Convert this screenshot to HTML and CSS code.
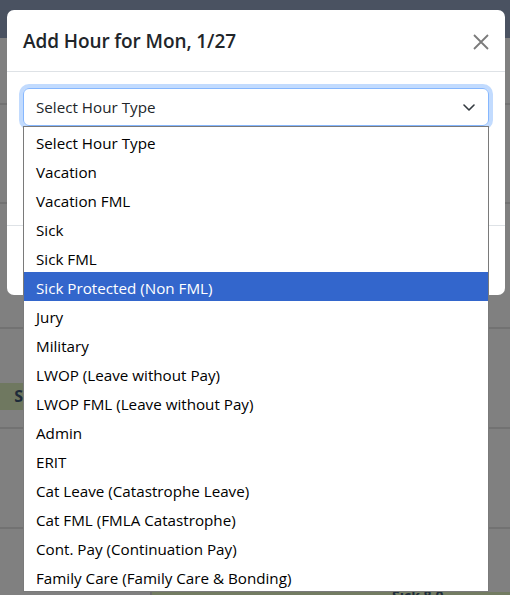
FILE: index.html
```html
<!DOCTYPE html>
<html lang="en">
<head>
<meta charset="utf-8">
<title>Add Hour</title>
<link rel="stylesheet" href="styles.css">
</head>
<body>
<div class="page">
  <div class="topbar"></div>
  <div class="band band-a"></div>
  <div class="band band-b"></div>
  <div class="band band-c"></div>
  <div class="band band-d"></div>
  <div class="band band-e"><span class="tag">S</span></div>
  <div class="band band-f"></div>
  <div class="band band-g"></div>
  <div class="band band-h"><span class="gap"></span><span class="sum">Sick 8.0</span></div>
</div>

<div class="modal">
  <div class="modal-header">
    <h5 class="modal-title">Add Hour for Mon, 1/27</h5>
    <button class="btn-close" aria-label="Close">
      <svg viewBox="0 0 16 16" width="16" height="16"><path d="M1 1L15 15M15 1L1 15" stroke="#7b7b7b" stroke-width="1.8" fill="none"/></svg>
    </button>
  </div>
  <div class="modal-body">
    <div class="select-wrap">
      <div class="form-select">
        <span>Select Hour Type</span>
        <svg class="chev" viewBox="0 0 12 7" width="12" height="7"><path d="M1 1l5 5 5-5" stroke="#343a40" stroke-width="1.6" fill="none" stroke-linecap="round" stroke-linejoin="round"/></svg>
      </div>
      <ul class="listbox">
        <li>Select Hour Type</li>
        <li>Vacation</li>
        <li>Vacation FML</li>
        <li>Sick</li>
        <li>Sick FML</li>
        <li class="active">Sick Protected (Non FML)</li>
        <li>Jury</li>
        <li>Military</li>
        <li>LWOP (Leave without Pay)</li>
        <li>LWOP FML (Leave without Pay)</li>
        <li>Admin</li>
        <li>ERIT</li>
        <li>Cat Leave (Catastrophe Leave)</li>
        <li>Cat FML (FMLA Catastrophe)</li>
        <li>Cont. Pay (Continuation Pay)</li>
        <li>Family Care (Family Care &amp; Bonding)</li>
      </ul>
    </div>
  </div>
  <div class="modal-footer"></div>
</div>
</body>
</html>
```
FILE: styles.css
```css
* { box-sizing: border-box; }
html, body { margin: 0; padding: 0; }
body {
  width: 510px;
  height: 595px;
  overflow: hidden;
  background: #808080;
  font-family: "Open Sans", "Noto Sans", sans-serif;
  color: #212529;
}
.page { display: flex; flex-direction: column; }
.topbar { height: 38px; background: #4a5261; }
.band { border-bottom: 2px solid #727272; flex: none; }
.band-a { height: 67px; }
.band-b { height: 99px; }
.band-c { height: 125px; }
.band-d { height: 54px; border-bottom: none; }
.band-e { height: 46px; display: flex; align-items: flex-start; }
.tag {
  display: block;
  width: 23px; height: 27px;
  background: #6f7860;
  color: #1d2b3a;
  font-weight: 700; font-size: 16px;
  text-align: right; line-height: 27px;
}
.band-f { height: 100px; }
.band-g { height: 63px; border-bottom: none; }
.band-h { height: 20px; display: flex; background: #737c62; }
.band-h .gap { width: 152px; background: #808080; border-right: 2px solid #6c6c6c; }
.band-h .sum { margin-left: 240px; font-weight: 700; color: #1d2b3a; font-size: 14px; line-height: 8px; }

.modal {
  position: absolute;
  top: 10px; left: 7px;
  width: 498px;
  background: #fff;
  border-radius: 7px;
}
.modal-header {
  display: flex;
  align-items: center;
  justify-content: space-between;
  padding: 16px;
  border-bottom: 1px solid #dee2e6;
  height: 62px;
}
.modal-title {
  margin: 0;
  font-size: 19px;
  font-weight: 600;
  line-height: 30px;
  color: #212529;
  letter-spacing: -0.1px;
}
.btn-close {
  border: 0; background: none; padding: 0;
  width: 16px; height: 16px;
  display: block;
  margin-top: 2px;
}
.btn-close svg { display: block; }
.modal-body { padding: 16px; height: 153px; }
.select-wrap { position: relative; }
.form-select {
  display: flex;
  align-items: center;
  justify-content: space-between;
  height: 38px;
  padding: 0 13px 0 12px;
  border: 1px solid #86b7fe;
  border-radius: 6px;
  box-shadow: 0 0 0 4px rgba(13, 110, 253, 0.25);
  font-size: 15.2px;
  color: #212529;
}
.chev { display: block; }
.listbox {
  position: absolute;
  top: 38px; left: 0; right: 0;
  margin: 0; padding: 0;
  list-style: none;
  background: #fff;
  border: 1px solid #7a7a7a;
  z-index: 2;
}
.listbox li {
  height: 29px;
  line-height: 33px;
  padding-left: 12px;
  font-size: 15.2px;
  color: #000;
  white-space: nowrap;
}
.listbox li.active { background: #3366cc; color: #fff; }
.modal-footer { height: 70px; border-top: 1px solid #dee2e6; }
```
